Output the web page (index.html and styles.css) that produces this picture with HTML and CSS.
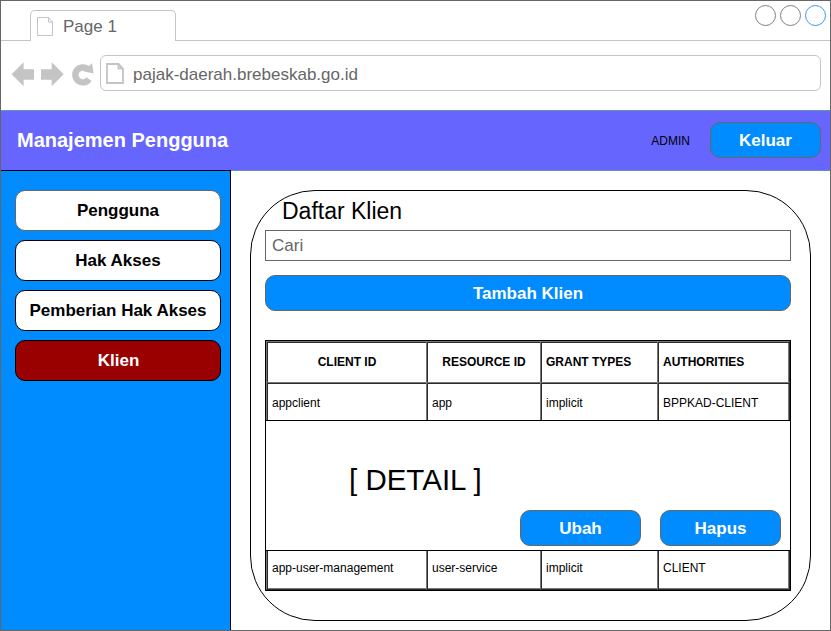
FILE: index.html
```html
<!DOCTYPE html>
<html lang="id">
<head>
<meta charset="utf-8">
<title>Manajemen Pengguna</title>
<link rel="stylesheet" href="styles.css">
</head>
<body>
<div class="window">
  <div class="tabs">
    <div class="tab">
      <svg class="tab-icon" width="17" height="20" viewBox="0 0 17 20"><path d="M.5.5h11l4 4.500v13.500H.5zM11.500.5V5h4" fill="none" stroke="#c4c4c4"/></svg>
      <span>Page 1</span>
    </div>
    <div class="circles"><i></i><i></i><i class="active"></i></div>
  </div>
  <div class="toolbar">
    <svg class="nav" width="84" height="26" viewBox="0 0 84 26" fill="#c4c4c4">
      <path d="M.6 13.300 12.600 1.300v7h10.400v10.400H12.600v6.600z"/>
      <path d="M52.700 13.300 40.700 1.300v7H30v10.400h10.700v6.600z"/>
      <path d="M76.600 8.100A7.500 7.500 0 1 0 78 18.200" fill="none" stroke="#c4c4c4" stroke-width="6.400"/>
      <path d="M81 2.300l1.700 10.200-10.600-2.300z"/>
    </svg>
    <div class="address">
      <svg width="18" height="21" viewBox="0 0 18 21"><path d="M1 1h11.500l4.500 4.500V20H1zM12.500 1v4.500H17" fill="none" stroke="#c4c4c4" stroke-width="1.800"/></svg>
      <span>pajak-daerah.brebeskab.go.id</span>
    </div>
  </div>
  <header class="header">
    <h1>Manajemen Pengguna</h1>
    <span class="role">ADMIN</span>
    <button class="btn logout">Keluar</button>
  </header>
  <div class="body">
    <nav class="sidebar">
      <a class="first">Pengguna</a>
      <a>Hak Akses</a>
      <a>Pemberian Hak Akses</a>
      <a class="current">Klien</a>
    </nav>
    <main class="card">
      <h2>Daftar Klien</h2>
      <div class="search">Cari</div>
      <button class="btn add">Tambah Klien</button>
      <div class="table">
        <div class="row head"><div>CLIENT ID</div><div>RESOURCE ID</div><div>GRANT TYPES</div><div>AUTHORITIES</div></div>
        <div class="row"><div>appclient</div><div>app</div><div>implicit</div><div>BPPKAD-CLIENT</div></div>
        <div class="detail">
          <p>[ DETAIL ]</p>
          <div class="actions"><button class="btn">Ubah</button><button class="btn">Hapus</button></div>
        </div>
        <div class="row last"><div>app-user-management</div><div>user-service</div><div>implicit</div><div>CLIENT</div></div>
      </div>
    </main>
  </div>
</div>
</body>
</html>
```
FILE: styles.css
```css
* { box-sizing: border-box; }
body { margin: 0; background: #fff; color: #000; font-family: "Liberation Sans", Arial, sans-serif; font-size: 17px; }
h1, h2, p { margin: 0; font-weight: normal; }
svg { flex: none; display: block; }
.window { width: 831px; height: 631px; border: 1px solid #666; overflow: hidden; }

.tabs { height: 40px; border-bottom: 1px solid #c4c4c4; display: flex; justify-content: space-between; padding: 9px 0 0 29px; }
.tab { width: 146px; height: 31px; border: 1px solid #c4c4c4; border-bottom: 0; border-radius: 5px 5px 0 0; background: #fff; display: flex; padding: 6px 0 0 6px; color: #666; line-height: 20px; }
.tab span { margin-left: 9px; }
.circles { display: flex; gap: 4px; margin: -5px 4px 0 0; }
.circles i { width: 21px; height: 21px; border: 1px solid #808080; border-radius: 50%; }
.circles .active { border-color: #3399ff; }

.toolbar { height: 69px; display: flex; padding: 14px 9px 0 10px; }
.nav { margin: 6px 5px 0 0; }
.address { flex: 1; height: 36px; border: 1px solid #c4c4c4; border-radius: 6px; display: flex; align-items: center; padding-left: 5px; color: #666; }
.address span { margin-left: 9px; padding-top: 3px; }

.header { height: 61px; margin: 0 -1px; border: 1px solid #6c8ebf; background: #66f; display: flex; align-items: center; padding: 0 9px 1px 16px; }
.header h1 { flex: 1; color: #fff; font-size: 20px; font-weight: bold; padding-top: 1px; }
.role { font-size: 12px; margin-right: 20px; padding-top: 2px; }
.btn { height: 36px; padding: 1px 0 0; border: 1px solid #666; border-radius: 10px; background: #008cff; color: #fff; font: bold 17px "Liberation Sans", Arial, sans-serif; }
.logout { width: 111px; padding-top: 2px; }

.body { display: flex; margin: -1px 0 0 -1px; height: 461px; }
.sidebar { width: 231px; height: 461px; border: 1px solid #000; background: #008cff; padding: 19px 9px 0 14px; display: flex; flex-direction: column; gap: 9px; }
.sidebar a { height: 41px; border: 1px solid #000; border-radius: 10px; background: #fff; font-weight: bold; text-align: center; line-height: 40px; white-space: nowrap; }
.sidebar .first { border-color: #666; }
.sidebar .current { background: #900; color: #fff; padding-left: 1px; }

.card { width: 561px; height: 431px; margin: 20px 0 0 19px; border: 1px solid #000; border-radius: 65px; padding: 5px 19px 0 14px; }
.card h2 { font-size: 23px; line-height: 30px; height: 34px; padding-left: 17px; }
.search { height: 31px; border: 1px solid #666; color: #666; padding-left: 6px; line-height: 29px; background: #fff; }
.add { display: block; width: 100%; margin-top: 14px; }

.table { margin-top: 29px; height: 251px; border: 1px solid #000; background: #fff; }
.row { display: grid; grid-template-columns: 160px 114px 117px 133px; height: 38px; font-size: 12px; }
.row > div { border-left: 1px solid #777; border-top: 1px solid #777; box-shadow: inset 1px 1px #2b2b2b; padding: 2px 0 0 5px; display: flex; align-items: center; }
.row > div:last-child { border-right: 1px solid #2b2b2b; box-shadow: inset 1px 1px #2b2b2b, inset -1px 0 #777; }
.head { height: 41px; font-weight: bold; }
.head > div { padding-top: 0; padding-bottom: 1px; }
.head > div:nth-child(-n+2) { justify-content: center; padding-left: 1px; }
.detail { height: 131px; border: solid #000; border-width: 1px 0; padding: 41px 9px 0 0; }
.detail p { font-size: 29.500px; line-height: 36px; padding-left: 83px; }
.actions { display: flex; justify-content: flex-end; gap: 19px; margin-top: 12px; }
.actions .btn { width: 121px; }
.last { height: 39px; }
.last > div { border-top: 0; border-bottom: 1px solid #2b2b2b; box-shadow: inset 1px 0 #2b2b2b, inset 0 -1px #777; padding: 0 0 5px 5px; }
.last > div:last-child { box-shadow: inset -1px 0 #777, inset 1px 0 #2b2b2b, inset 0 -1px #777; }
```
